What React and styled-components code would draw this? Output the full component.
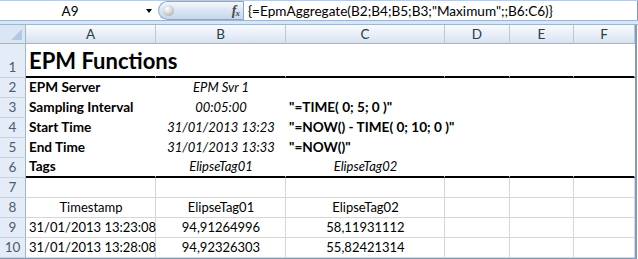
import React from 'react';
import styled, { createGlobalStyle } from 'styled-components';

const GlobalStyle = createGlobalStyle`
  body {
    margin: 0;
    background: #ffffff;
    font-family: 'Lato', 'Liberation Sans', sans-serif;
  }
`;

const columns = ['A', 'B', 'C', 'D', 'E', 'F'];
const colWidths = [130, 130, 159, 65, 64, 61];

const rows = [
  { n: 1, cells: [{ text: 'EPM Functions', title: true }], thick: true },
  { n: 2, cells: [{ text: 'EPM Server', bold: true }, { text: 'EPM Svr 1', italic: true, align: 'center' }] },
  {
    n: 3,
    cells: [
      { text: 'Sampling Interval', bold: true },
      { text: '00:05:00', italic: true, align: 'center' },
      { text: '"=TIME( 0; 5; 0 )"', bold: true },
    ],
  },
  {
    n: 4,
    cells: [
      { text: 'Start Time', bold: true },
      { text: '31/01/2013 13:23', italic: true, align: 'center' },
      { text: '"=NOW() - TIME( 0; 10; 0 )"', bold: true },
    ],
  },
  {
    n: 5,
    cells: [
      { text: 'End Time', bold: true },
      { text: '31/01/2013 13:33', italic: true, align: 'center' },
      { text: '"=NOW()"', bold: true },
    ],
  },
  {
    n: 6,
    cells: [
      { text: 'Tags', bold: true },
      { text: 'ElipseTag01', italic: true, align: 'center' },
      { text: 'ElipseTag02', italic: true, align: 'center' },
    ],
    thick: true,
  },
  { n: 7, cells: [], grid: true },
  {
    n: 8,
    cells: [
      { text: 'Timestamp', align: 'center' },
      { text: 'ElipseTag01', align: 'center' },
      { text: 'ElipseTag02', align: 'center' },
    ],
    grid: true,
  },
  {
    n: 9,
    cells: [
      { text: '31/01/2013 13:23:08' },
      { text: '94,91264996', align: 'center' },
      { text: '58,11931112', align: 'center' },
    ],
    grid: true,
  },
  {
    n: 10,
    cells: [
      { text: '31/01/2013 13:28:08' },
      { text: '94,92326303', align: 'center' },
      { text: '55,82421314', align: 'center' },
    ],
    grid: true,
  },
];

const Window = styled.div`
  width: 638px;
  height: 259px;
  overflow: hidden;
  background: #ffffff;
`;

const FormulaBar = styled.div`
  display: flex;
  height: 21px;
  box-sizing: border-box;
  border-top: 1px solid #b8cbe4;
  border-bottom: 1px solid #9eb6ce;
  background: #ffffff;
`;

const NameBox = styled.div`
  position: relative;
  width: 158px;
  display: flex;
  align-items: center;
  justify-content: center;
  padding-right: 18px;
  box-sizing: border-box;
  font-size: 13.5px;
  color: #000;
`;

const DropArrow = styled.span`
  position: absolute;
  right: 6px;
  top: 8px;
  width: 0;
  height: 0;
  border-left: 3px solid transparent;
  border-right: 3px solid transparent;
  border-top: 4px solid #000;
`;

const FxPill = styled.div`
  width: 85px;
  display: flex;
  align-items: center;
  justify-content: space-between;
  padding: 0 4px;
  box-sizing: border-box;
  border: 1px solid #8ba7cb;
  border-right: none;
  border-radius: 10px 0 0 10px;
  background: linear-gradient(#f3f7fc, #d8e4f4 55%, #c6d7ee);
`;

const Knob = styled.span`
  width: 11px;
  height: 11px;
  border-radius: 50%;
  background: radial-gradient(circle at 40% 35%, #ffffff 0%, #d8d8d8 45%, #9a9a9a 100%);
`;

const Fx = styled.span`
  font-family: 'Liberation Serif', serif;
  font-style: italic;
  font-weight: bold;
  font-size: 14px;
  color: #4a4a4a;
  letter-spacing: -1px;

  sub {
    font-size: 9px;
    vertical-align: -1px;
  }
`;

const FormulaInput = styled.div`
  flex: 1;
  display: flex;
  align-items: center;
  padding-left: 4px;
  border-left: 1px solid #8ba7cb;
  border-right: 1px solid #7f9db9;
  font-size: 13.6px;
  white-space: nowrap;
  color: #000;
`;

const Band = styled.div`
  height: 4px;
  background: #dbe5f3;
  border-bottom: 1px solid #9eb6ce;
  box-sizing: border-box;
`;

const Sheet = styled.div`
  display: grid;
  grid-template-columns: 26px ${colWidths.map((w) => `${w}px`).join(' ')};
  grid-template-rows: 19px 34px repeat(9, 20px);
  width: 637px;
  box-sizing: border-box;
  border-right: 2px solid #7f9db9;
  border-bottom: 1px solid #7f9db9;
`;

const Corner = styled.div`
  position: relative;
  box-sizing: border-box;
  background: #dbe6f4;
  border-right: 1px solid #9eb6ce;
  border-bottom: 1px solid #9eb6ce;

  &::after {
    content: '';
    position: absolute;
    right: 3px;
    bottom: 3px;
    width: 0;
    height: 0;
    border-left: 11px solid transparent;
    border-bottom: 11px solid #b3c8e4;
  }
`;

const ColHeader = styled.div`
  display: flex;
  align-items: center;
  justify-content: center;
  box-sizing: border-box;
  background: linear-gradient(#f8fafd, #e6edf7 60%, #d7e2f0);
  border-right: 1px solid #b6c9df;
  border-bottom: 1px solid #9eb6ce;
  font-size: 13.5px;
  color: #25403f;
`;

const RowHeader = styled.div`
  display: flex;
  align-items: flex-end;
  justify-content: center;
  padding-bottom: 2px;
  box-sizing: border-box;
  background: #e4ecf7;
  border-right: 1px solid #9eb6ce;
  border-bottom: 1px solid #c5d3e6;
  font-size: 13.5px;
  color: #4a5c6e;
`;

const Cell = styled.div`
  display: flex;
  align-items: flex-end;
  justify-content: ${(p) => (p.$align === 'center' ? 'center' : 'flex-start')};
  padding: 0 2px 2px 3px;
  box-sizing: border-box;
  white-space: nowrap;
  min-width: 0;
  font-size: ${(p) => (p.$title ? '22px' : p.$bold ? '13.6px' : '13px')};
  font-weight: ${(p) => (p.$bold || p.$title ? 700 : 400)};
  font-style: ${(p) => (p.$italic ? 'italic' : 'normal')};
  color: #000;
  border-right: 1px solid ${(p) => (p.$grid ? '#d0d7e5' : 'transparent')};
  border-bottom: ${(p) =>
    p.$thick ? '2px solid #000' : `1px solid ${p.$grid ? '#d0d7e5' : 'transparent'}`};
`;

function SheetRow({ row }) {
  return (
    <>
      <RowHeader>{row.n}</RowHeader>
      {columns.map((c, i) => {
        const cell = row.cells[i] || {};
        return (
          <Cell
            key={c}
            $bold={cell.bold}
            $italic={cell.italic}
            $title={cell.title}
            $align={cell.align}
            $grid={row.grid}
            $thick={row.thick}
          >
            {cell.text}
          </Cell>
        );
      })}
    </>
  );
}

export default function App() {
  return (
    <>
      <GlobalStyle />
      <Window>
        <FormulaBar>
          <NameBox>
            A9
            <DropArrow />
          </NameBox>
          <FxPill>
            <Knob />
            <Fx>
              f<sub>x</sub>
            </Fx>
          </FxPill>
          <FormulaInput>{'{=EpmAggregate(B2;B4;B5;B3;"Maximum";;B6:C6)}'}</FormulaInput>
        </FormulaBar>
        <Band />
        <Sheet>
          <Corner />
          {columns.map((c) => (
            <ColHeader key={c}>{c}</ColHeader>
          ))}
          {rows.map((r) => (
            <SheetRow key={r.n} row={r} />
          ))}
        </Sheet>
      </Window>
    </>
  );
}
